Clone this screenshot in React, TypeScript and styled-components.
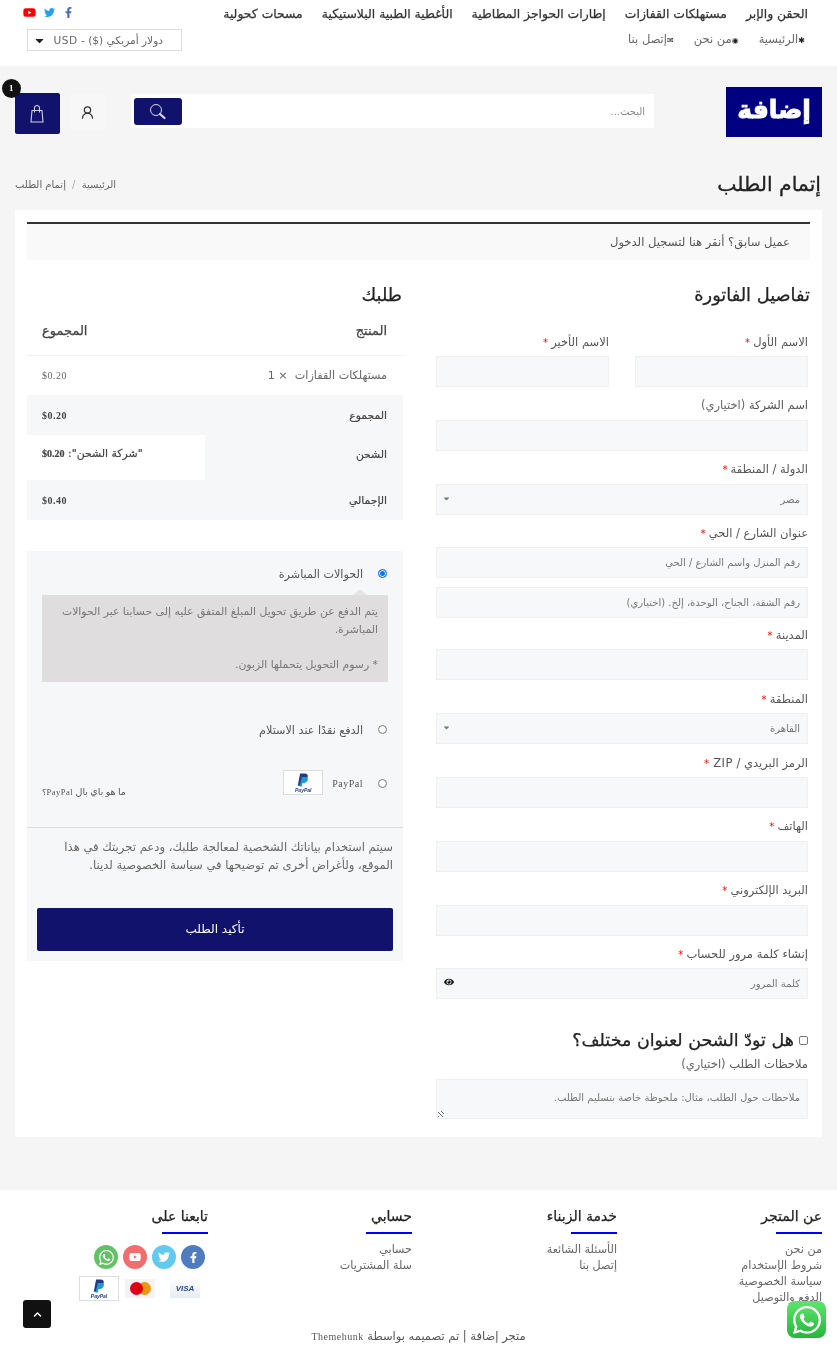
import styled, { createGlobalStyle } from "styled-components";
import { FaFacebookF, FaTwitter, FaYoutube, FaWhatsapp, FaEye, FaChevronUp, FaCaretDown } from "react-icons/fa";
import { LuUserRound } from "react-icons/lu";

const SANS = '"DejaVu Sans", sans-serif';
const SERIF = '"Liberation Serif", "DejaVu Sans", serif';
const NAVY = "#10126b";

const GlobalStyle = createGlobalStyle`
    html, body { margin: 0; padding: 0; overflow: hidden; height: 1350px; }
    body { background: #f5f5f5; font-family: ${SANS}; color: #555; letter-spacing: .5px; }
    * { box-sizing: border-box; }
`;

const PaypalLogo = ({ small }: { small?: boolean }) => (
    <PaypalTile $small={small}>
        <svg width="14" height="14" viewBox="0 0 24 24">
            <path fill="#253b80" d="M7 1h8c4 0 6 2 5 6-1 4-4 6-8 6H9l-1 9H3z" />
            <path fill="#179bd7" d="M10 7h7c3 0 4 2 3 5-1 3-3 5-7 5h-2l-1 6H6z" />
        </svg>
        <PaypalWord>PayPal</PaypalWord>
    </PaypalTile>
);

const Field = ({ label, req, hint, select, placeholder, half, eye }: {
    label?: string; req?: boolean; hint?: string; select?: boolean; placeholder?: string; half?: boolean; eye?: boolean;
}) => (
    <FieldWrap $half={half}>
        {label && <FieldLabel>{label}{hint && <Hint> {hint}</Hint>}{req && <Req> *</Req>}</FieldLabel>}
        <InputBox>
            {placeholder}
            {select && <SelectArrow><FaCaretDown /></SelectArrow>}
            {eye && <EyeIcon><FaEye /></EyeIcon>}
        </InputBox>
    </FieldWrap>
);

const FooterCol = ({ title, links }: { title: string; links: string[] }) => (
    <FootCol>
        <FootTitle>{title}</FootTitle>
        {links.map(l => <FootLink key={l}>{l}</FootLink>)}
    </FootCol>
);

const App = () => {
    return <Page>
        <GlobalStyle />
        <TopBar>
            <TopNavs>
                <MainNav>
                    <span>الحقن والإبر</span>
                    <span>مستهلكات القفازات</span>
                    <span>إطارات الحواجز المطاطية</span>
                    <span>الأغطية الطبية البلاستيكية</span>
                    <span>مسحات كحولية</span>
                </MainNav>
                <SubNav>
                    <span><NavGlyph>✱</NavGlyph>الرئيسية</span>
                    <span><NavGlyph>◉</NavGlyph>من نحن</span>
                    <span><NavGlyph>✉</NavGlyph>إتصل بنا</span>
                </SubNav>
            </TopNavs>
            <TopLeft>
                <Socials>
                    <FaFacebookF color="#4b6cb7" />
                    <FaTwitter color="#1da1f2" />
                    <FaYoutube color="#f00" size={13} />
                </Socials>
                <Currency>دولار أمريكي ($) - USD <FaCaretDown color="#222" size={13} /></Currency>
            </TopLeft>
        </TopBar>

        <Header>
            <Logo>إضافة</Logo>
            <SearchBar>
                <SearchText>البحث...</SearchText>
                <SearchBtn>
                    <svg width="17" height="17" viewBox="0 0 17 17" fill="none" stroke="#d8d8e8">
                        <circle cx="7" cy="7" r="5.5" strokeWidth="1" />
                        <path d="M11 11l4.5 4" strokeWidth="2.2" strokeLinecap="round" />
                    </svg>
                </SearchBtn>
            </SearchBar>
            <UserBox><LuUserRound size={15} color="#333" /></UserBox>
            <Cart>
                <svg width="14" height="18" viewBox="0 0 14 18" fill="none" stroke="#cfcfe2" strokeWidth="1.1">
                    <path d="M2 5.5h10l1 11.5H1z" />
                    <path d="M4.5 7.5V3a2.5 2.5 0 0 1 5 0v4.5" />
                </svg>
                <Badge>1</Badge>
            </Cart>
        </Header>

        <TitleRow>
            <PageTitle>إتمام الطلب</PageTitle>
            <Crumbs>الرئيسية <CrumbSep>/</CrumbSep> إتمام الطلب</Crumbs>
        </TitleRow>

        <Card>
            <Notice>عميل سابق؟ أنقر هنا لتسجيل الدخول</Notice>
            <Columns>
                <Billing>
                    <SectionTitle>تفاصيل الفاتورة</SectionTitle>
                    <NameRow>
                        <Field label="الاسم الأول" req half />
                        <Field label="الاسم الأخير" req half />
                    </NameRow>
                    <Field label="اسم الشركة" hint="(اختياري)" />
                    <Field label="الدولة / المنطقة" req select placeholder="مصر" />
                    <Field label="عنوان الشارع / الحي" req placeholder="رقم المنزل واسم الشارع / الحي" />
                    <ExtraInput>رقم الشقة، الجناح، الوحدة، إلخ. (اختياري)</ExtraInput>
                    <Field label="المدينة" req />
                    <Field label="المنطقة" req select placeholder="القاهرة" />
                    <Field label="الرمز البريدي / ZIP" req />
                    <Field label="الهاتف" req />
                    <Field label="البريد الإلكتروني" req />
                    <Field label="إنشاء كلمة مرور للحساب" req placeholder="كلمة المرور" eye />
                    <ShipHeading><CheckBox />هل تودّ الشحن لعنوان مختلف؟</ShipHeading>
                    <NotesLabel>ملاحظات الطلب <Hint>(اختياري)</Hint></NotesLabel>
                    <NotesBox>
                        ملاحظات حول الطلب، مثال: ملحوظة خاصة بتسليم الطلب.
                        <Grip />
                    </NotesBox>
                </Billing>

                <Order>
                    <SectionTitle>طلبك</SectionTitle>
                    <HeadRow>
                        <strong>المنتج</strong>
                        <strong>المجموع</strong>
                    </HeadRow>
                    <ItemRow>
                        <span>مستهلكات القفازات &nbsp;× 1</span>
                        <Price>$0.20</Price>
                    </ItemRow>
                    <TotalRow>
                        <RowName>المجموع</RowName>
                        <Amount>$0.20</Amount>
                    </TotalRow>
                    <ShipRow>
                        <RowName>الشحن</RowName>
                        <ShipValue>"شركة الشحن": <Amount>$0.20</Amount></ShipValue>
                    </ShipRow>
                    <TotalRow>
                        <RowName>الإجمالي</RowName>
                        <Amount>$0.40</Amount>
                    </TotalRow>

                    <Payment>
                        <PayMethod $h={44}>
                            <Radio $on />
                            <PayLabel>الحوالات المباشرة</PayLabel>
                        </PayMethod>
                        <PayBox>
                            <p>يتم الدفع عن طريق تحويل المبلغ المتفق عليه إلى حسابنا عبر الحوالات المباشرة.</p>
                            <p>* رسوم التحويل يتحملها الزبون.</p>
                        </PayBox>
                        <PayMethod $h={54} $top={20}>
                            <Radio />
                            <PayLabel>الدفع نقدًا عند الاستلام</PayLabel>
                        </PayMethod>
                        <PayMethod $h={54}>
                            <Radio />
                            <PaypalName>PayPal</PaypalName>
                            <PaypalLogo />
                            <WhatPaypal>ما هو باي بال <WhatLatin>PayPal؟</WhatLatin></WhatPaypal>
                        </PayMethod>
                        <Privacy>
                            سيتم استخدام بياناتك الشخصية لمعالجة طلبك، ودعم تجربتك في هذا الموقع، ولأغراض أخرى تم توضيحها في سياسة الخصوصية لدينا.
                        </Privacy>
                        <SubmitBtn>تأكيد الطلب</SubmitBtn>
                    </Payment>
                </Order>
            </Columns>
        </Card>

        <Footer>
            <FootGrid>
                <FooterCol title="عن المتجر" links={["من نحن", "شروط الإستخدام", "سياسة الخصوصية", "الدفع والتوصيل"]} />
                <FooterCol title="خدمة الزبناء" links={["الأسئلة الشائعة", "إتصل بنا"]} />
                <FooterCol title="حسابي" links={["حسابي", "سلة المشتريات"]} />
                <FootCol>
                    <FootTitle>تابعنا على</FootTitle>
                    <Circles>
                        <Circle $bg="#4f7bbf"><FaFacebookF size={11} /></Circle>
                        <Circle $bg="#62c9ef"><FaTwitter size={12} /></Circle>
                        <Circle $bg="#f26d6d"><FaYoutube size={12} /></Circle>
                        <Circle $bg="#62c265"><FaWhatsapp size={17} /></Circle>
                    </Circles>
                    <PayIcons>
                        <VisaTile>VISA</VisaTile>
                        <MasterTile>
                            <MasterDot $c="#eb001b" />
                            <MasterDot $c="#f79e1b" $overlap />
                        </MasterTile>
                        <PaypalLogo small />
                    </PayIcons>
                </FootCol>
            </FootGrid>
            <Copy>متجر إضافة | تم تصميمه بواسطة <Themehunk>Themehunk</Themehunk></Copy>
        </Footer>

        <ScrollTop><FaChevronUp size={9} color="#fff" /></ScrollTop>
        <WhatsApp><FaWhatsapp size={32} color="#fff" /></WhatsApp>
    </Page>
}

export default App;

const Page = styled.div`
    direction: rtl;
    width: 837px;
    height: 1350px;
    overflow: hidden;
`;

const TopBar = styled.div`
    height: 66px;
    background: #fff;
    display: flex;
    justify-content: space-between;
    padding: 0 29px 0 27px;
`;

const TopNavs = styled.div`
    display: flex;
    flex-direction: column;
`;

const MainNav = styled.div`
    display: flex;
    gap: 19px;
    font-size: 12.4px;
    font-weight: 500;
    color: #333;
    line-height: 28px;
    white-space: nowrap;
    -webkit-text-stroke: 0.25px #333;
`;

const SubNav = styled.div`
    display: flex;
    gap: 20px;
    padding-right: 3px;
    font-size: 11.5px;
    line-height: 22px;
    color: #666;
    white-space: nowrap;
`;

const NavGlyph = styled.span`
    font-size: 8px;
    color: #222;
`;

const TopLeft = styled.div`
    display: flex;
    flex-direction: column;
    align-items: flex-end;
`;

const Socials = styled.div`
    display: flex;
    align-items: center;
    gap: 8px;
    height: 24px;
    font-size: 11px;
    margin-left: -4px;
    align-self: flex-end;
`;

const Currency = styled.div`
    width: 155px;
    height: 22px;
    margin-top: 5px;
    border: 1px solid #ddd;
    display: flex;
    justify-content: space-between;
    align-items: center;
    padding: 0 18px 0 5px;
    font-size: 10.6px;
    color: #666;
    white-space: nowrap;
`;

const Header = styled.div`
    display: flex;
    align-items: flex-start;
    padding: 21px 15px 0;
    height: 105px;
    position: relative;
`;

const Logo = styled.div`
    width: 96px;
    height: 50px;
    background: #000080;
    color: #fff;
    font-size: 25px;
    font-weight: 700;
    line-height: 46px;
    text-align: center;
    letter-spacing: 0;
    -webkit-text-stroke: 1px #fff;
`;

const SearchBar = styled.div`
    width: 524px;
    height: 34px;
    margin: 7px 72px 0 0;
    background: #fff;
    display: flex;
    justify-content: space-between;
    align-items: center;
    padding: 0 9px 0 3px;
`;

const SearchText = styled.span`
    font-size: 10px;
    letter-spacing: 0;
    color: #8a8a8a;
`;

const SearchBtn = styled.div`
    width: 48px;
    height: 27px;
    border-radius: 3px;
    background: ${NAVY};
    display: flex;
    align-items: center;
    justify-content: center;
`;

const UserBox = styled.div`
    width: 36px;
    height: 36px;
    margin: 7px 25px 0 0;
    background: #f7f7f7;
    display: flex;
    align-items: center;
    justify-content: center;
`;

const Cart = styled.div`
    width: 45px;
    height: 41px;
    margin: 6px 10px 0 0;
    background: ${NAVY};
    border-radius: 2px;
    position: relative;
    display: flex;
    align-items: center;
    justify-content: center;
`;

const Badge = styled.div`
    position: absolute;
    left: -13px;
    top: -14px;
    width: 19px;
    height: 19px;
    border-radius: 50%;
    background: #111;
    color: #fff;
    font: 700 9px/19px ${SERIF};
    text-align: center;
`;

const TitleRow = styled.div`
    height: 26px;
    display: flex;
    justify-content: space-between;
    align-items: center;
    padding: 0 16px 0 15px;
`;

const PageTitle = styled.h1`
    margin: 0;
    font-size: 20.4px;
    font-weight: 500;
    letter-spacing: 0;
    color: #222;
    -webkit-text-stroke: 0.3px #222;
`;

const Crumbs = styled.div`
    font-size: 10px;
    color: #666;
`;

const CrumbSep = styled.span`
    color: #aaa;
    margin: 0 3px;
`;

const Card = styled.div`
    margin: 13px 15px 0;
    height: 927px;
    background: #fff;
    padding: 12px;
`;

const Notice = styled.div`
    height: 38px;
    border-top: 2px solid #333;
    background: #f9f9f9;
    padding-right: 20px;
    font-size: 11.6px;
    line-height: 36px;
    color: #555;
`;

const Columns = styled.div`
    display: grid;
    grid-template-columns: 374px 376px;
    justify-content: space-between;
    padding-top: 23px;
`;

const SectionTitle = styled.h3`
    margin: 0;
    font-size: 17.8px;
    line-height: 24px;
    font-weight: 500;
    letter-spacing: 0;
    color: #222;
    -webkit-text-stroke: 0.25px #222;
`;

const Billing = styled.div`
    padding-right: 2px;
    ${SectionTitle} { margin-right: -2px; }
`;

const Order = styled.div`
    ${SectionTitle} { margin-right: 1px; }
`;

const NameRow = styled.div`
    display: flex;
    justify-content: space-between;
    margin-top: 24.5px;
`;

const FieldWrap = styled.div<{ $half?: boolean }>`
    width: ${p => p.$half ? "173px" : "auto"};
    margin-bottom: 8.3px;
`;

const FieldLabel = styled.div`
    font-size: 11.5px;
    line-height: 21px;
    margin-bottom: 3.5px;
    color: #555;
    white-space: nowrap;
`;

const Hint = styled.span`
    color: #666;
`;

const Req = styled.span`
    color: #f00;
    font-size: 10px;
`;

const InputBox = styled.div`
    height: 31px;
    background: #f7f8f9;
    border: 1px solid #f0f0f0;
    font-size: 10px;
    letter-spacing: 0;
    line-height: 29px;
    color: #777;
    padding: 0 7px;
    position: relative;
`;

const ExtraInput = styled(InputBox)`
    margin-top: 1.2px;
    margin-bottom: 7.3px;
`;

const SelectArrow = styled.span`
    position: absolute;
    left: 5px;
    top: 1px;
    font-size: 9px;
    color: #777;
`;

const EyeIcon = styled.span`
    position: absolute;
    left: 7px;
    top: 0;
    font-size: 10px;
    color: #111;
`;

const ShipHeading = styled.div`
    display: flex;
    align-items: center;
    gap: 5px;
    margin-top: 29px;
    font-size: 17.5px;
    letter-spacing: 0;
    line-height: 24px;
    color: #222;
    -webkit-text-stroke: 0.25px #222;
`;

const CheckBox = styled.span`
    width: 9px;
    height: 9px;
    border: 1px solid #777;
    border-radius: 2px;
    background: #fff;
`;

const NotesLabel = styled(FieldLabel)`
    line-height: 25px;
    margin-bottom: 2px;
`;

const NotesBox = styled(InputBox)`
    height: 40px;
    line-height: 36px;
`;

const Grip = styled.span`
    position: absolute;
    left: 1px;
    bottom: 1px;
    width: 6px;
    height: 6px;
    background: repeating-linear-gradient(45deg, #666 0 1px, transparent 1px 3px);
`;

const HeadRow = styled.div`
    display: flex;
    justify-content: space-between;
    height: 49px;
    padding: 16px 16px 0 15px;
    border-bottom: 1px solid #f0f0f0;
    font-size: 13px;
    color: #444;
    strong { font-weight: 500; -webkit-text-stroke: 0.25px #444; }
`;

const ItemRow = styled.div`
    display: flex;
    justify-content: space-between;
    align-items: center;
    height: 39px;
    padding: 0 16px 0 15px;
    font-size: 11.2px;
    color: #666;
`;

const Price = styled.span`
    font: 10px ${SERIF};
    direction: ltr;
    unicode-bidi: isolate;
    color: #666;
`;

const TotalRow = styled.div`
    display: flex;
    justify-content: space-between;
    align-items: center;
    height: 40px;
    padding: 0 16px 0 15px;
    background: #f6f7f9;
`;

const RowName = styled.span`
    font-size: 10.8px;
    color: #444;
    -webkit-text-stroke: 0.2px #444;
`;

const Amount = styled.span`
    font: 700 10px ${SERIF};
    direction: ltr;
    unicode-bidi: isolate;
    color: #444;
`;

const ShipRow = styled.div`
    display: flex;
    height: 45px;
    background: #f6f7f9;
    padding-right: 16px;
    justify-content: space-between;
    align-items: stretch;
    ${RowName} { align-self: center; margin-top: -7px; }
`;

const ShipValue = styled.div`
    width: 178px;
    background: #fff;
    padding: 12px 0 0 15px;
    text-align: left;
    font-size: 10.9px;
    color: #444;
    -webkit-text-stroke: 0.2px #444;
    white-space: nowrap;
`;

const Payment = styled.div`
    margin-top: 31px;
    height: 410px;
    background: #f6f7f9;
`;

const PayMethod = styled.div<{ $h: number; $top?: number }>`
    height: ${p => p.$h}px;
    margin-top: ${p => p.$top || 0}px;
    padding: 0 16px 0 15px;
    display: flex;
    align-items: center;
    font-size: 11.2px;
    color: #555;
`;

const PayLabel = styled.span`
    margin-top: 3px;
`;

const Radio = styled.span<{ $on?: boolean }>`
    width: 9px;
    height: 9px;
    margin-left: 15px;
    border-radius: 50%;
    background: ${p => p.$on ? "#0a74ff" : "#fff"};
    border: 1px solid ${p => p.$on ? "#0a74ff" : "#777"};
    box-shadow: ${p => p.$on ? "inset 0 0 0 1px #fff" : "none"};
`;

const PayBox = styled.div`
    margin: 0 15px;
    height: 87px;
    background: #dfdddd;
    padding: 8px 10px 0;
    font-size: 10.85px;
    line-height: 17.5px;
    color: #777;
    position: relative;
    &:before {
        content: "";
        position: absolute;
        top: -6px;
        right: 21px;
        border: 7px solid transparent;
        border-top: 0;
        border-bottom: 6px solid #e6e5e5;
    }
    p { margin: 0; }
    p + p { margin-top: 17.5px; }
`;

const PaypalName = styled.span`
    font: 10px ${SERIF};
`;

const PaypalTile = styled.span<{ $small?: boolean }>`
    width: 40px;
    height: 25px;
    margin-right: ${p => p.$small ? "0" : "9px"};
    margin-top: ${p => p.$small ? "0" : "-1px"};
    background: #fff;
    border: 1px solid #ddd;
    display: inline-flex;
    flex-direction: column;
    align-items: center;
    justify-content: center;
    line-height: 1;
`;

const PaypalWord = styled.span`
    font: italic 700 5px "Liberation Sans", sans-serif;
    letter-spacing: 0;
    color: #253b80;
    direction: ltr;
`;

const WhatPaypal = styled.span`
    margin-right: auto;
    font: 9.5px ${SERIF};
    color: #555;
    margin-top: 17px;
`;

const WhatLatin = styled.span`
    font-size: 8.5px;
`;

const Privacy = styled.div`
    border-top: 1px solid #ddd;
    margin-top: 17px;
    padding: 10px 10px 0;
    font-size: 11.6px;
    line-height: 18.3px;
    color: #666;
`;

const SubmitBtn = styled.div`
    margin: 33px 10px 0;
    height: 43px;
    background: ${NAVY};
    border-radius: 2px;
    color: #fff;
    font-size: 12px;
    letter-spacing: 0;
    line-height: 42px;
    text-align: center;
`;

const Footer = styled.div`
    margin-top: 53px;
    height: 160px;
    background: #fff;
    padding: 14px 15px 0;
    position: relative;
`;

const FootGrid = styled.div`
    display: grid;
    grid-template-columns: 205px 205px 204px 193px;
`;

const FootCol = styled.div`
    font-size: 11.2px;
    color: #666;
`;

const FootTitle = styled.div`
    width: max-content;
    min-width: 46px;
    font-size: 14px;
    letter-spacing: 0;
    line-height: 24px;
    color: #222;
    -webkit-text-stroke: 0.25px #222;
    position: relative;
    height: 30px;
    margin-bottom: 8px;
    &:after {
        content: "";
        position: absolute;
        right: 0;
        bottom: 0;
        width: 46px;
        height: 2px;
        background: #00f;
    }
`;

const FootLink = styled.div`
    line-height: 16px;
`;

const Circles = styled.div`
    display: flex;
    gap: 5px;
    margin: 11px 3px 0 0;
`;

const Circle = styled.span<{ $bg: string }>`
    width: 24px;
    height: 24px;
    border-radius: 50%;
    background: ${p => p.$bg};
    color: #fff;
    display: flex;
    align-items: center;
    justify-content: center;
`;

const PayIcons = styled.div`
    display: flex;
    align-items: center;
    margin: 7px 8px 0 0;
`;

const VisaTile = styled.span`
    width: 30px;
    height: 19px;
    margin-left: 15px;
    background: linear-gradient(#fdfdfe, #e6ecf3);
    color: #2a4a8c;
    font: italic 700 8px/19px "Liberation Sans", sans-serif;
    letter-spacing: 0;
    text-align: center;
    direction: ltr;
`;

const MasterTile = styled.span`
    width: 30px;
    height: 19px;
    margin-left: 6px;
    background: #f3f3f3;
    display: flex;
    direction: ltr;
    align-items: center;
    justify-content: center;
`;

const MasterDot = styled.span<{ $c: string; $overlap?: boolean }>`
    width: 13px;
    height: 13px;
    border-radius: 50%;
    background: ${p => p.$c};
    margin-left: ${p => p.$overlap ? "-5px" : "0"};
    mix-blend-mode: multiply;
`;

const Copy = styled.div`
    position: absolute;
    left: 0;
    right: 0;
    top: 139px;
    text-align: center;
    font-size: 11.5px;
    color: #555;
`;

const Themehunk = styled.span`
    font: 10px ${SERIF};
`;

const ScrollTop = styled.div`
    position: fixed;
    left: 23px;
    top: 1300px;
    width: 28px;
    height: 28px;
    border-radius: 3px;
    background: #111;
    display: flex;
    align-items: center;
    justify-content: center;
`;

const WhatsApp = styled.div`
    position: fixed;
    left: 787px;
    top: 1301px;
    width: 39px;
    height: 37px;
    border-radius: 8px;
    background: linear-gradient(#5fe56e, #27b53a);
    display: flex;
    align-items: center;
    justify-content: center;
`;
